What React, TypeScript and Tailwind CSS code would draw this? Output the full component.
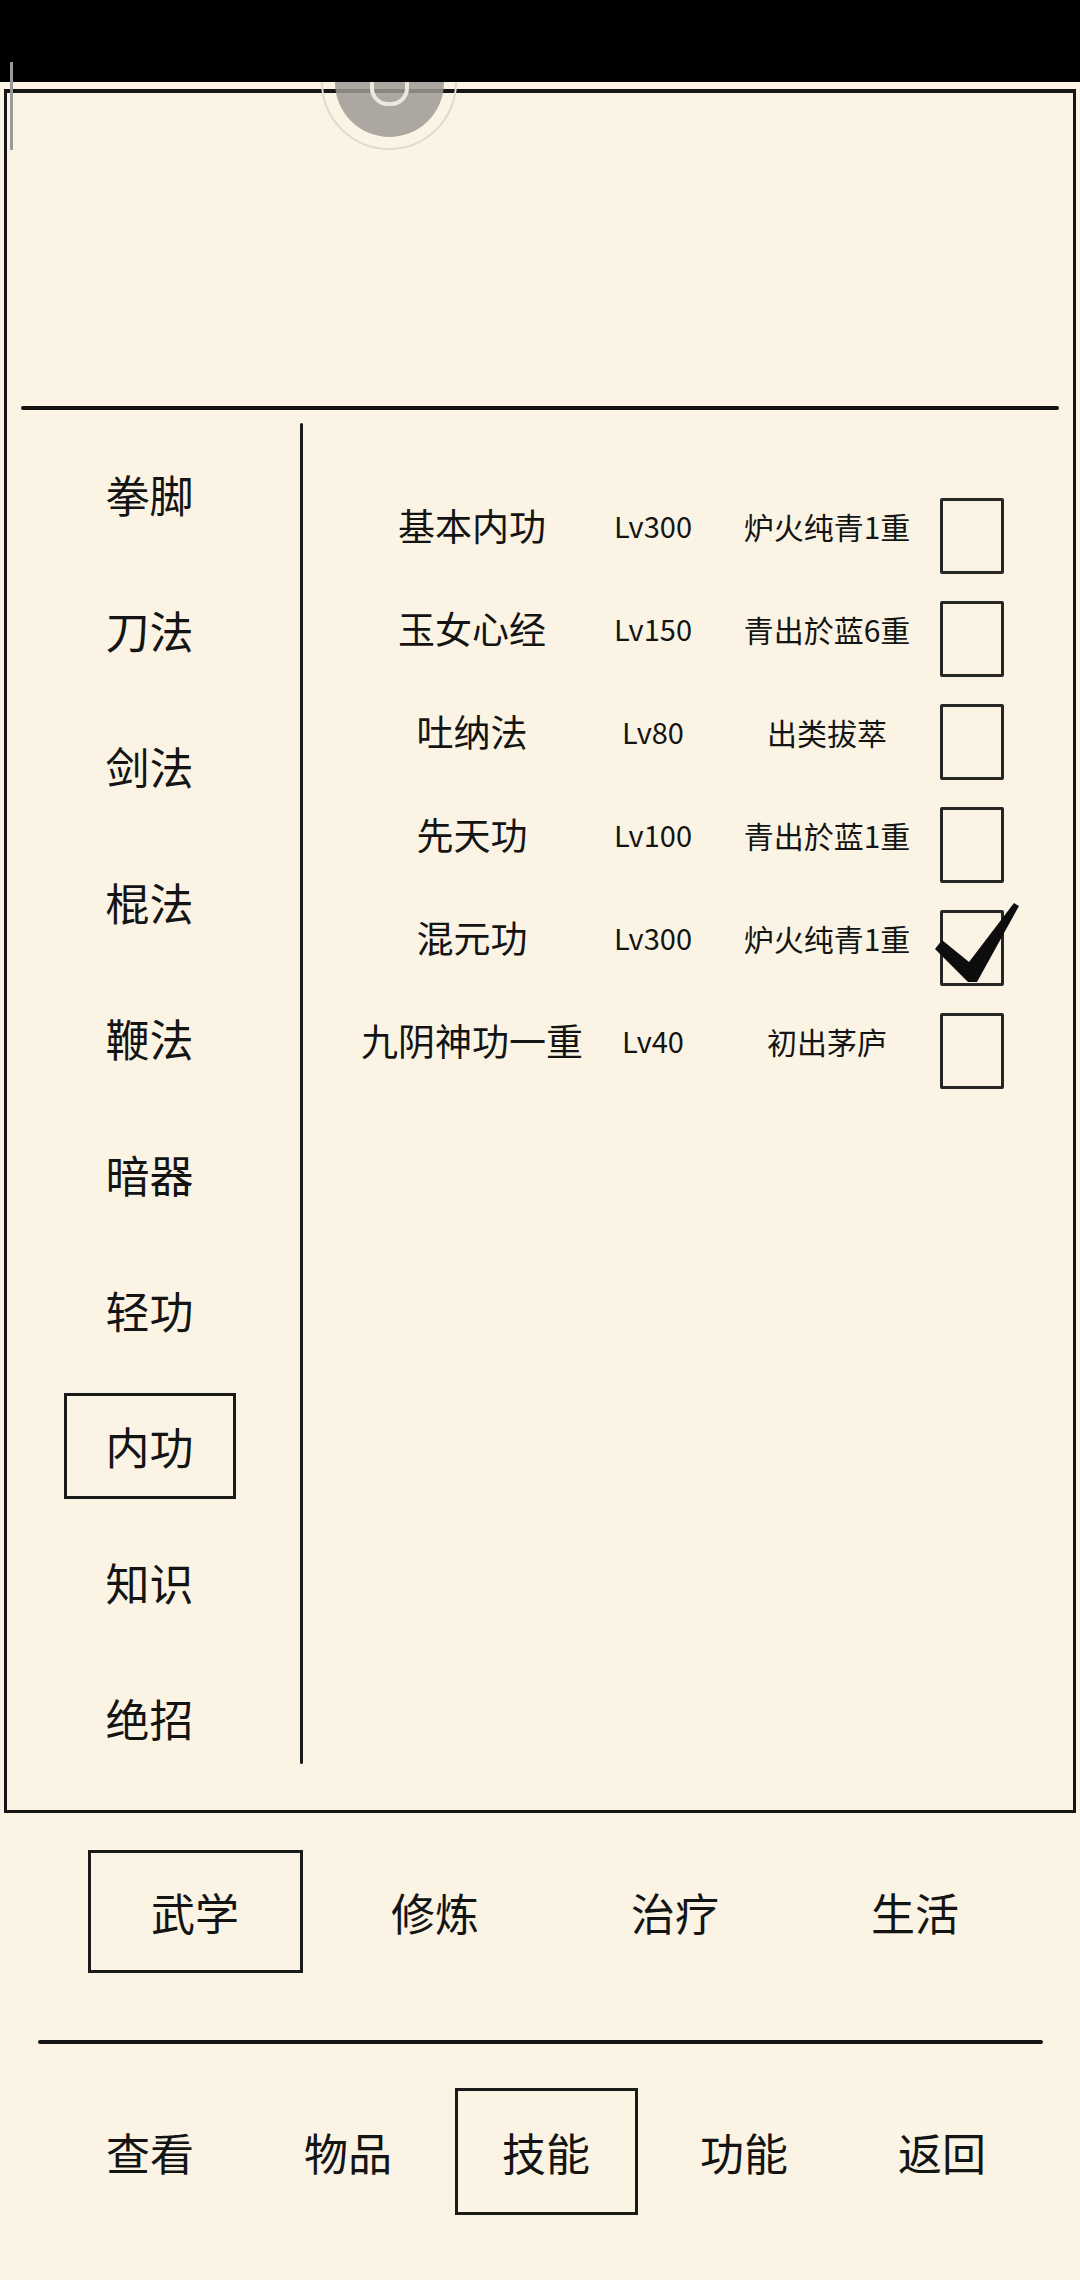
import React from 'react';

const categories = ['拳脚', '刀法', '剑法', '棍法', '鞭法', '暗器', '轻功', '内功', '知识', '绝招'];

const skills = [
  { name: '基本内功', lv: 'Lv300', rank: '炉火纯青1重', on: false },
  { name: '玉女心经', lv: 'Lv150', rank: '青出於蓝6重', on: false },
  { name: '吐纳法', lv: 'Lv80', rank: '出类拔萃', on: false },
  { name: '先天功', lv: 'Lv100', rank: '青出於蓝1重', on: false },
  { name: '混元功', lv: 'Lv300', rank: '炉火纯青1重', on: true },
  { name: '九阴神功一重', lv: 'Lv40', rank: '初出茅庐', on: false },
];

const tabs = ['武学', '修炼', '治疗', '生活'];
const menu = ['查看', '物品', '技能', '功能', '返回'];

const Check = () => (
  <svg className="absolute left-[-8px] top-[-10px] w-[84px] h-[80px]" viewBox="0 0 84 80">
    <path d="M0 46 L7 37 L34 59 L79 0 L84 3 L42 79 L33 79 Z" fill="#0d0d0d" />
  </svg>
);

const SkillRow = ({ s }: { s: (typeof skills)[number] }) => (
  <div className="flex items-center h-[103px]">
    <div className="w-[240px] text-center text-[37px] leading-none">{s.name}</div>
    <div className="w-[122px] text-center text-[29px] leading-none">{s.lv}</div>
    <div className="w-[226px] text-center text-[30px] leading-none">{s.rank}</div>
    <div className="relative self-start mt-[24px] w-[64px] h-[76px] border-[3px] border-[#262626] rounded-[2px]">
      {s.on && <Check />}
    </div>
  </div>
);

export default function App() {
  return (
    <div className="relative w-[1080px] h-[2280px] overflow-hidden bg-[#fbf4e4] text-[#141414] font-['Noto_Sans_CJK_SC',sans-serif]">
      {/* floating bubble, partly under the status bar */}
      <div className="absolute left-[321px] top-[14px] w-[136px] h-[136px] rounded-full border-2 border-[#e0dacd] flex items-center justify-center z-10">
        <div className="relative w-[109px] h-[109px] rounded-full bg-[#9d9a95]/85">
          <div className="absolute left-[35px] top-[28px] w-[39px] h-[50px] rounded-b-[18px] border-4 border-t-0 border-[#ece8df]" />
        </div>
      </div>
      <div className="relative z-20 h-[82px] bg-black" />
      <div className="absolute left-[10px] top-[62px] w-[3px] h-[88px] bg-[#9a9a9a] z-30" />

      <div className="px-[4px] pt-[7px]">
        <div className="h-[1724px] flex flex-col border-x-[3px] border-b-[3px] border-t-4 border-[#161616]">
          <div className="h-[313px]" />
          <div className="mx-[14px] h-[4px] rounded-full bg-[#141414]" />
          <div className="flex flex-1">
            <div className="w-[293px] pt-[16px] pr-[8px] flex flex-col items-center">
              {categories.map((c) => (
                <div key={c} className="h-[136px] flex items-center justify-center">
                  <div
                    className={
                      c === '内功'
                        ? 'w-[172px] h-[106px] flex items-center justify-center border-[3px] border-[#1a1a1a] text-[44px] leading-none'
                        : 'text-[44px] leading-none'
                    }
                  >
                    {c}
                  </div>
                </div>
              ))}
            </div>
            <div className="w-[3px] mt-[13px] mb-[46px] bg-[#1a1a1a] rounded-full" />
            <div className="flex-1 pt-[64px] pl-[49px]">
              {skills.map((s) => (
                <SkillRow key={s.name} s={s} />
              ))}
            </div>
          </div>
        </div>
      </div>

      <div className="mt-[37px] pl-[75px] grid grid-cols-[repeat(4,240px)]">
        {tabs.map((t) => (
          <div key={t} className="flex justify-center">
            <div
              className={
                'w-[215px] h-[123px] flex items-center justify-center text-[44px] leading-none ' +
                (t === '武学' ? 'border-[3px] border-[#1a1a1a]' : '')
              }
            >
              {t}
            </div>
          </div>
        ))}
      </div>

      <div className="mt-[67px] ml-[38px] w-[1005px] h-[4px] rounded-full bg-[#141414]" />

      <div className="mt-[44px] pl-[51px] grid grid-cols-[repeat(5,198px)]">
        {menu.map((m) => (
          <div key={m} className="flex justify-center">
            <div
              className={
                'w-[183px] h-[127px] flex items-center justify-center text-[44px] leading-none ' +
                (m === '技能' ? 'border-[3px] border-[#1a1a1a]' : '')
              }
            >
              {m}
            </div>
          </div>
        ))}
      </div>
    </div>
  );
}
